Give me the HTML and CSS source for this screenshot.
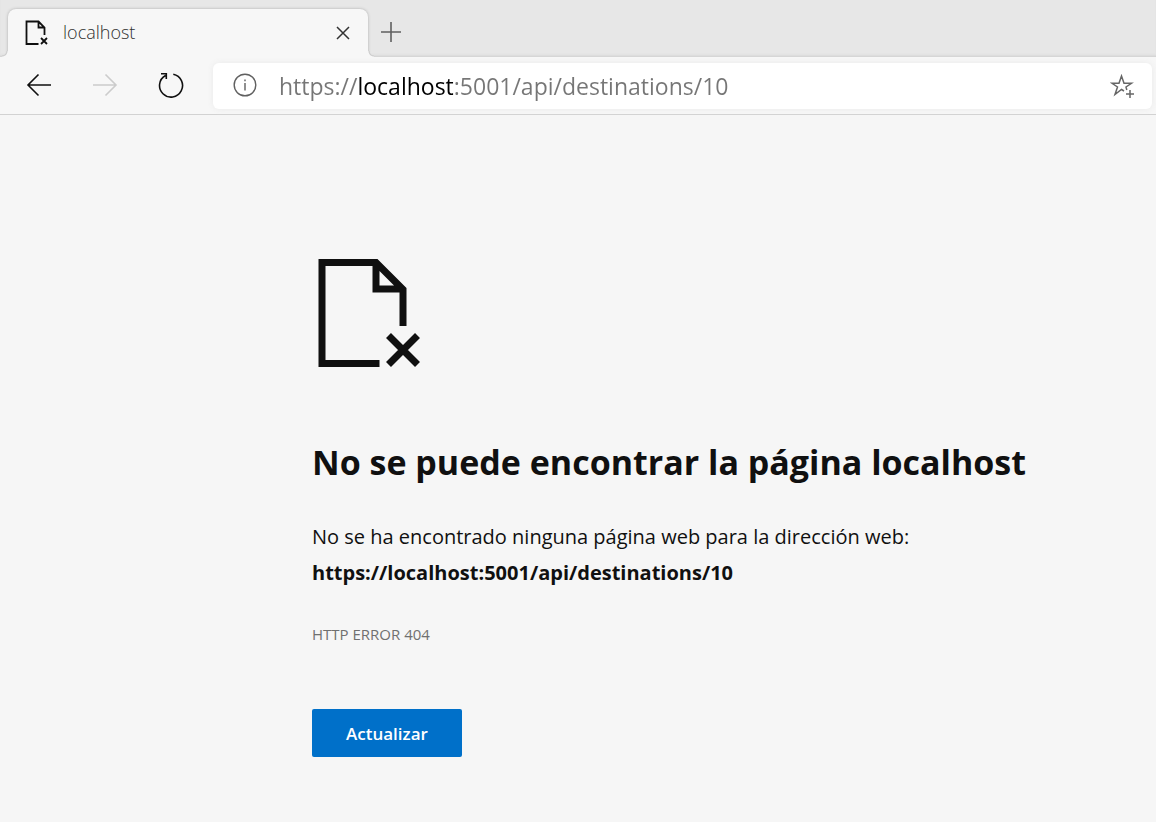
FILE: index.html
```html
<!DOCTYPE html>
<html lang="es">
<head>
<meta charset="utf-8">
<meta name="viewport" content="width=device-width, initial-scale=1">
<title>localhost</title>
<link rel="stylesheet" href="styles.css">
</head>
<body>
<header class="browser">
  <div class="tabstrip">
    <div class="tab">
      <svg class="tab-icon" viewBox="0 0 24 26" aria-hidden="true"><path d="M14.500 24H2.500V1.500H14.500L20.500 7.500V15M14.500 1.500V7.500H20.500M17 18L23 24M23 18L17 24"/></svg>
      <span class="tab-title">localhost</span>
      <button class="tab-close" type="button" aria-label="Cerrar pestaña"><svg viewBox="0 0 14 14"><path d="M1 1L13 13M13 1L1 13"/></svg></button>
    </div>
    <button class="new-tab" type="button" aria-label="Nueva pestaña"><svg viewBox="0 0 20 20"><path d="M10 0V20M0 10H20"/></svg></button>
  </div>
  <nav class="toolbar" aria-label="Navegación">
    <button class="nav-button" type="button" aria-label="Atrás"><svg viewBox="0 0 26 26"><path d="M25 13H2M12.500 2.500L2 13L12.500 23.500"/></svg></button>
    <button class="nav-button" type="button" aria-label="Adelante" disabled><svg viewBox="0 0 26 26"><path d="M1 13H24M13.500 2.500L24 13L13.500 23.500"/></svg></button>
    <button class="nav-button" type="button" aria-label="Actualizar página"><svg viewBox="0 0 26 26"><path d="M15.300 2.300A11.500 11.500 0 1 1 7.500 3.500M3 1.700H8.300V7"/></svg></button>
    <form class="address">
      <button class="site-info" type="button" aria-label="Información del sitio"><svg viewBox="0 0 24 24"><circle cx="12" cy="12" r="10.800"/><path d="M12 10V17.500M12 6.500V8.300"/></svg></button>
      <input class="url" type="text" aria-label="Dirección" value="https://localhost:5001/api/destinations/10" spellcheck="false">
      <button class="favorite" type="button" aria-label="Agregar a favoritos"><svg viewBox="0 0 24 24"><path d="M14 17L11.500 15.500L5 20.500L7.500 13L2 9.300H9L11.500 2L14 9.300H21.500L16 13L16.800 16M20 16V24M16 20H24"/></svg></button>
    </form>
  </nav>
</header>
<main class="error">
  <svg class="error-icon" viewBox="0 0 104 110" aria-hidden="true"><path d="M62.500 105.500H5V4.500H59L86 31.500V68M59 4.500V31H86M71.500 77.500L100.500 106.500M100.500 77.500L71.500 106.500"/></svg>
  <h1 class="error-title">No se puede encontrar la página localhost</h1>
  <p class="error-text">No se ha encontrado ninguna página web para la dirección web: <strong class="error-url">https://localhost:5001/api/destinations/10</strong></p>
  <p class="error-code">HTTP ERROR 404</p>
  <button class="reload" type="button">Actualizar</button>
</main>
</body>
</html>
```
FILE: styles.css
```css
* { box-sizing: border-box; }

body {
  margin: 0;
  min-height: 100vh;
  background: #f6f6f6;
  color: #101010;
  font-family: "Segoe UI", "Open Sans", "Noto Sans", sans-serif;
}

button {
  display: flex;
  align-items: center;
  justify-content: center;
  flex: none;
  padding: 0;
  border: 0;
  background: none;
  color: inherit;
  font: inherit;
}

svg { display: block; fill: none; stroke: currentColor; }

.browser { border-bottom: 1px solid #d2d2d2; }

.tabstrip {
  display: flex;
  height: 57px;
  padding: 9px 8px 0;
  background: #e7e7e7;
  box-shadow: inset 0 -3px 3px -2px #cccccc;
}

.tab {
  position: relative;
  display: flex;
  align-items: center;
  width: 360px;
  padding: 0 18px 0 16px;
  border-radius: 8px 8px 0 0;
  background: #f7f7f7;
  box-shadow: 0 0 3px #aaaaaa;
}

/* Flared feet that join the tab to the toolbar */
.tab::before,
.tab::after {
  content: "";
  position: absolute;
  bottom: 0;
  width: 6px;
  height: 6px;
}
.tab::before {
  right: 100%;
  background: radial-gradient(circle at 0 0, transparent 4px, #cccccc 5px, #f7f7f7 6px);
}
.tab::after {
  left: 100%;
  background: radial-gradient(circle at 100% 0, transparent 4px, #cccccc 5px, #f7f7f7 6px);
}

.tab-icon { width: 24px; height: 26px; stroke: #101010; stroke-width: 1.8; }

.tab-title {
  flex: 1;
  margin-left: 15px;
  padding-bottom: 2px;
  color: #303030;
  font-size: 18px;
  font-weight: 300;
}

.tab-close svg { width: 14px; height: 14px; stroke: #333333; stroke-width: 1.5; }

.new-tab { width: 46px; height: 46px; }
.new-tab svg { width: 20px; height: 20px; stroke: #606060; stroke-width: 1.6; }

.toolbar {
  position: relative;
  display: flex;
  align-items: center;
  gap: 20px;
  height: 57px;
  padding: 0 4px 0 16px;
  background: #f7f7f7;
}

.nav-button {
  width: 46px;
  height: 46px;
  padding-bottom: 2px;
  color: #101010;
}
.nav-button:disabled { color: #cccccc; }
.nav-button svg { width: 26px; height: 26px; stroke-width: 1.6; }

.address {
  display: flex;
  align-items: center;
  flex: 1;
  min-width: 0;
  height: 46px;
  margin-left: -1px;
  padding: 0 18px 0 20px;
  border-radius: 6px;
  background: #ffffff;
  box-shadow: 0 0 6px #eaeaea;
}

.site-info { padding-bottom: 2px; color: #606060; }
.site-info svg { width: 24px; height: 24px; stroke-width: 1.4; }

.url {
  flex: 1;
  min-width: 0;
  height: 36px;
  margin-left: 22px;
  padding: 0;
  border: 0;
  outline: 0;
  background: linear-gradient(90deg, #767676 78px, #000000 78px 174px, #767676 174px);
  background-clip: text;
  -webkit-background-clip: text;
  color: transparent;
  caret-color: #000000;
  font: inherit;
  font-size: 23px;
}

.favorite { color: #666666; }
.favorite svg { width: 24px; height: 24px; stroke-width: 1.5; }

.error {
  max-width: 1100px;
  padding: 143px 24px 64px 312px;
}

.error-icon { width: 104px; height: 110px; margin-left: 5px; stroke-width: 7; }

.error-title {
  margin: 70px 0 0;
  font-size: 34px;
  font-weight: 700;
  line-height: 48px;
}

.error-text {
  margin: 33px 0 0;
  font-size: 20px;
  line-height: 36px;
}

.error-url { display: block; font-weight: 700; }

.error-code {
  margin: 31px 0 0;
  color: #707070;
  font-size: 15px;
  line-height: 24px;
}

.reload {
  width: 150px;
  height: 48px;
  margin-top: 63px;
  border-radius: 2px;
  background: #0070c9;
  color: #ffffff;
  font-size: 17px;
  font-weight: 600;
}
```
